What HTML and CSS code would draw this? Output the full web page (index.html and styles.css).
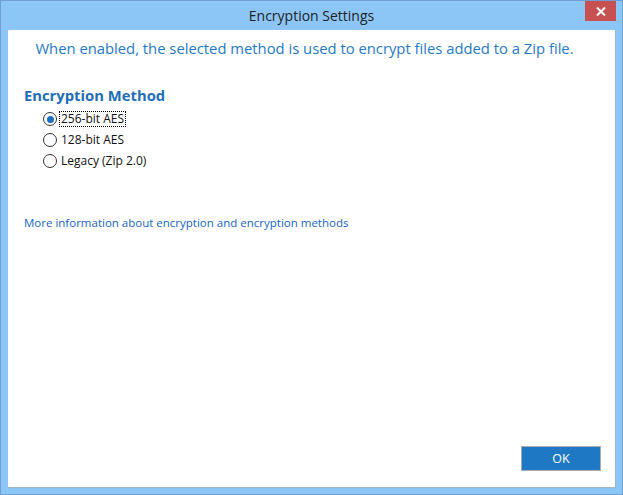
FILE: index.html
```html
<!DOCTYPE html>
<html>
<head>
<meta charset="utf-8">
<link rel="stylesheet" href="styles.css">
</head>
<body>
<div class="window">
  <div class="titlebar">
    <span class="title">Encryption Settings</span>
    <div class="close"><svg width="10" height="9" viewBox="0 0 10 9"><path d="M1 0.5 L9 8.5 M9 0.5 L1 8.5" stroke="#fff" stroke-width="2"/></svg></div>
  </div>
  <div class="content">
    <p class="intro">When enabled, the selected method is used to encrypt files added to a Zip file.</p>
    <h2 class="section">Encryption Method</h2>
    <div class="options">
      <label class="opt"><span class="radio checked"></span><span class="lbl focus">256-bit AES</span></label>
      <label class="opt"><span class="radio"></span><span class="lbl">128-bit AES</span></label>
      <label class="opt"><span class="radio"></span><span class="lbl">Legacy (Zip 2.0)</span></label>
    </div>
    <a class="link">More information about encryption and encryption methods</a>
    <div class="spacer"></div>
    <div class="footer"><button class="ok">OK</button></div>
  </div>
</div>
</body>
</html>
```
FILE: styles.css
```css
html, body { margin: 0; padding: 0; }
body { width: 623px; height: 495px; overflow: hidden; font-family: "Open Sans", "Noto Sans", sans-serif; }
.window {
  box-sizing: border-box;
  width: 623px; height: 495px;
  border: 1px solid #6f9fd0;
  background: #8cc6f7;
  display: flex; flex-direction: column;
  position: relative;
}
.titlebar {
  height: 29px;
  display: flex; align-items: center; justify-content: center;
}
.title { font-size: 14px; color: #222; margin-top: 0; }
.close {
  position: absolute; top: 0; right: 6px;
  width: 31px; height: 20px;
  background: #c75050;
  display: flex; align-items: center; justify-content: center;
}
.content {
  flex: 1;
  margin: 0 6px 6px 7px;
  background: #fff;
  border-right: 1px solid #9fb6cc;
  border-bottom: 1px solid #9fb6cc;
  display: flex; flex-direction: column;
}
.intro { margin: 8px 0 0 0; padding-right: 14px; text-align: center; font-size: 14.8px; color: #1e7ac8; }
.section { margin: 27px 0 0 16px; font-size: 14.8px; font-weight: 700; color: #1e6eb8; }
.options { margin: 6px 0 0 35px; display: flex; flex-direction: column; gap: 5px; }
.opt { display: flex; align-items: center; gap: 2px; font-size: 12px; color: #111; height: 16px; }
.radio {
  box-sizing: border-box; width: 14px; height: 14px; border-radius: 50%;
  border: 1px solid #333; background: #fff; position: relative;
}
.radio.checked::after {
  content: ""; position: absolute; left: 2.5px; top: 2.5px; width: 7px; height: 7px;
  border-radius: 50%; background: #1c6fc4;
}
.lbl { padding: 0 1px; border: 1px dotted transparent; line-height: 14px; }
.lbl.focus { border-color: #000; }
.link { margin: 46px 0 0 16px; font-size: 11.5px; color: #1565c8; }
.spacer { flex: 1; }
.footer { display: flex; justify-content: flex-end; padding: 0 14px 16px 0; }
.ok {
  width: 80px; height: 25px; box-sizing: border-box;
  border: 1px solid #adadad; background: #1e78c4; color: #fff;
  font-family: "Open Sans", "Noto Sans", sans-serif; font-size: 12.5px; padding: 0;
}
```
